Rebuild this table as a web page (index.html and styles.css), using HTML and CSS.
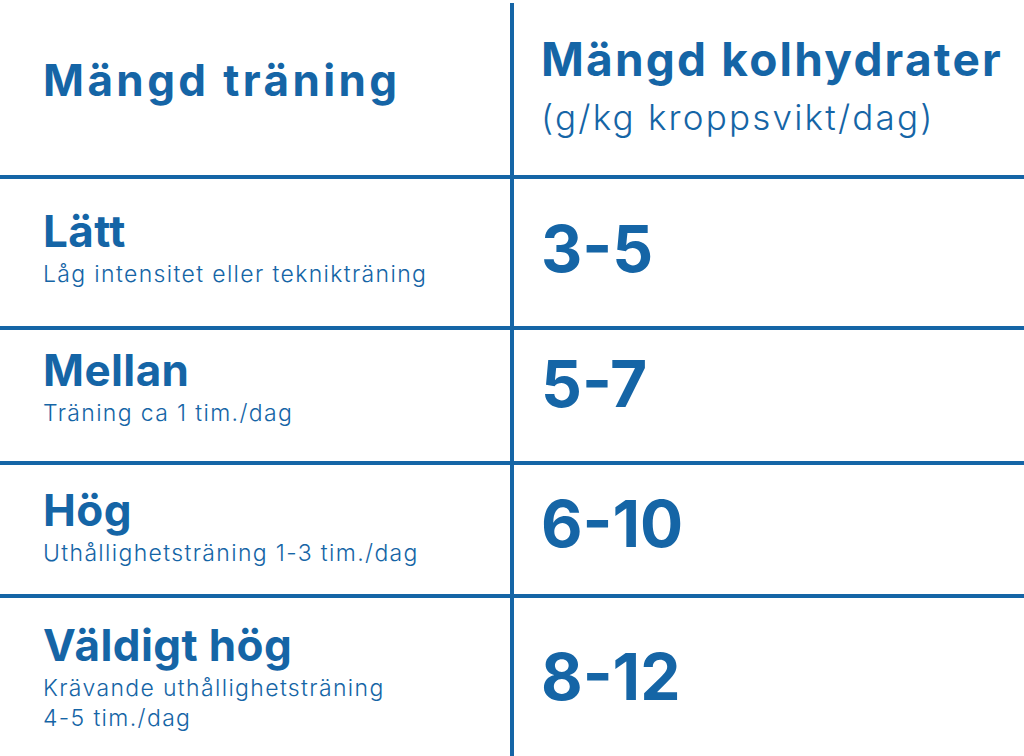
FILE: index.html
```html
<!DOCTYPE html>
<html lang="sv">
<head>
<meta charset="utf-8">
<title>Mängd kolhydrater</title>
<link rel="stylesheet" href="styles.css">
</head>
<body>
<div class="table">
  <div class="row row-head">
    <div class="cell cell-left"><h1 class="head-title">Mängd träning</h1></div>
    <div class="cell cell-right">
      <h2 class="head-title head-title-right">Mängd kolhydrater</h2>
      <p class="head-sub">(g/kg kroppsvikt/dag)</p>
    </div>
  </div>
  <div class="row row-1">
    <div class="cell cell-left">
      <div class="title">Lätt</div>
      <div class="sub">Låg intensitet eller teknikträning</div>
    </div>
    <div class="cell cell-right"><div class="num">3-5</div></div>
  </div>
  <div class="row row-2">
    <div class="cell cell-left">
      <div class="title">Mellan</div>
      <div class="sub">Träning ca 1 tim./dag</div>
    </div>
    <div class="cell cell-right"><div class="num">5-7</div></div>
  </div>
  <div class="row row-3">
    <div class="cell cell-left">
      <div class="title">Hög</div>
      <div class="sub">Uthållighetsträning 1-3 tim./dag</div>
    </div>
    <div class="cell cell-right"><div class="num">6-10</div></div>
  </div>
  <div class="row row-4">
    <div class="cell cell-left">
      <div class="title">Väldigt hög</div>
      <div class="sub">Krävande uthållighetsträning<br>4-5 tim./dag</div>
    </div>
    <div class="cell cell-right"><div class="num">8-12</div></div>
  </div>
</div>
</body>
</html>
```
FILE: styles.css
```css
html, body {
  margin: 0;
  padding: 0;
  background: #ffffff;
}
body {
  font-family: Inter, Lato, sans-serif;
  color: #1565a6;
  width: 1024px;
  height: 756px;
  overflow: hidden;
}
.table {
  margin-top: 3px;
  display: flex;
  flex-direction: column;
  gap: 4px;
  background: #1565a6;
  height: 753px;
}
.row {
  display: grid;
  grid-template-columns: 510px 510px;
  column-gap: 4px;
}
.cell {
  background: #ffffff;
  box-sizing: border-box;
}
.cell-left {
  padding-left: 43px;
}
.cell-right {
  padding-left: 27px;
}
.row-head { height: 172px; }
.row-1 { height: 147px; }
.row-2 { height: 131px; }
.row-3 { height: 129px; }
.row-4 { flex: 1; }

.head-title {
  margin: 0;
  font-size: 44px;
  line-height: 55px;
  font-weight: 700;
  letter-spacing: 3.4px;
}
.row-head .cell-left { padding-top: 50px; }
.row-head .cell-right { padding-top: 28px; }
.head-title-right {
  font-size: 46px;
  line-height: 56px;
  letter-spacing: 2.2px;
}
.head-sub {
  margin: 10px 0 0;
  font-size: 35px;
  line-height: 41px;
  font-weight: 300;
  letter-spacing: 2.2px;
}

.title {
  font-size: 44px;
  line-height: 55px;
  font-weight: 700;
  letter-spacing: 0.4px;
}
.sub {
  font-size: 23px;
  line-height: 30px;
  font-weight: 300;
  letter-spacing: 1.35px;
}
.num {
  font-size: 64px;
  line-height: 66px;
  font-weight: 700;
}
.row-1 .cell-left { padding-top: 25px; }
.row-2 .cell-left { padding-top: 13px; }
.row-3 .cell-left { padding-top: 18px; }
.row-4 .cell-left { padding-top: 20px; }
.row-1 .cell-right { padding-top: 37px; }
.row-2 .cell-right { padding-top: 21px; }
.row-3 .cell-right { padding-top: 26px; }
.row-4 .cell-right { padding-top: 46px; }
```
